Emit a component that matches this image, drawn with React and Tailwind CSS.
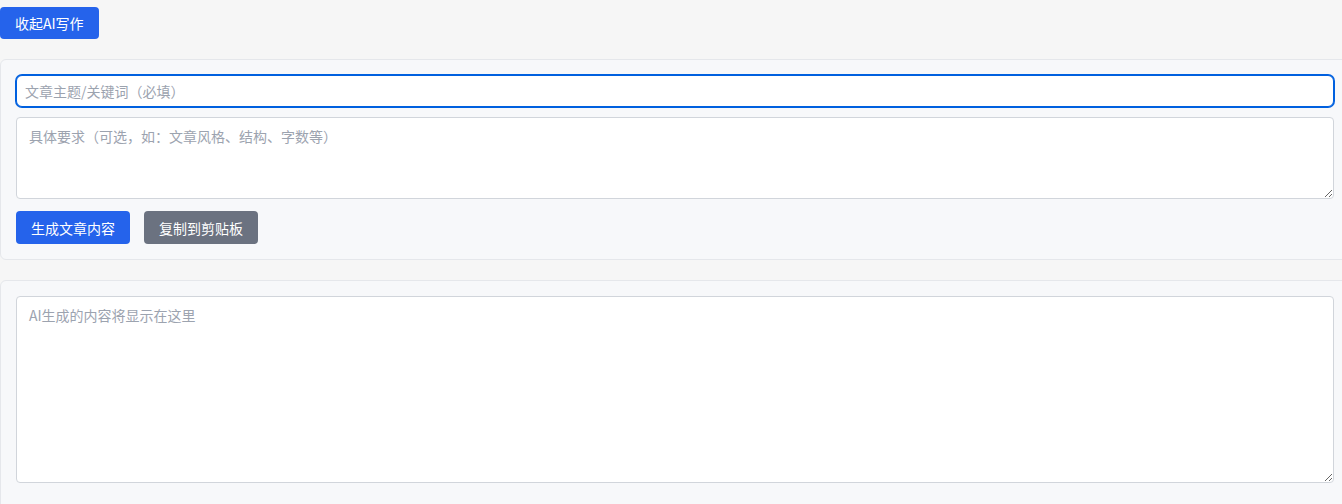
import React from 'react';

const font = { fontFamily: '"Noto Sans CJK SC", "Noto Sans", sans-serif' };

export default function App() {
  return (
    <div className="min-h-[504px] overflow-hidden bg-[#f6f6f6] pt-[7px] text-sm" style={font}>
      <button className="mb-5 h-8 rounded-[4px] bg-[#2563eb] px-[15px] text-sm text-white">
        收起AI写作
      </button>

      {/* input panel */}
      <div className="mb-5 w-[1350px] rounded-md border border-[#e5e7eb] bg-[#f7f8fa] p-[15px]">
        <input
          autoFocus
          placeholder="文章主题/关键词（必填）"
          className="mb-[10px] block h-[32px] w-full rounded-md border border-[#0060df] bg-white px-2 text-sm text-gray-800 ring-1 ring-[#0060df] outline-none placeholder:text-[#9ca3af]"
        />
        <textarea
          placeholder="具体要求（可选，如：文章风格、结构、字数等）"
          className="mb-3 block h-[82px] w-full rounded-[4px] border border-[#d1d5db] bg-white px-3 py-2 text-sm text-gray-800 outline-none placeholder:text-[#9ca3af]"
        />
        <div className="flex gap-[14px]">
          <button className="h-[33px] rounded-[4px] bg-[#2563eb] px-[15px] text-sm text-white">
            生成文章内容
          </button>
          <button className="h-[33px] rounded-[4px] bg-[#6b7280] px-[15px] text-sm text-white">
            复制到剪贴板
          </button>
        </div>
      </div>

      {/* output panel */}
      <div className="w-[1350px] rounded-md border border-[#e5e7eb] bg-[#f7f8fa] px-[15px] pt-[15px] pb-8">
        <textarea
          placeholder="AI生成的内容将显示在这里"
          className="block h-[187px] w-full rounded-[4px] border border-[#d1d5db] bg-white px-3 py-2 text-sm text-gray-800 outline-none placeholder:text-[#9ca3af]"
        />
      </div>
    </div>
  );
}
